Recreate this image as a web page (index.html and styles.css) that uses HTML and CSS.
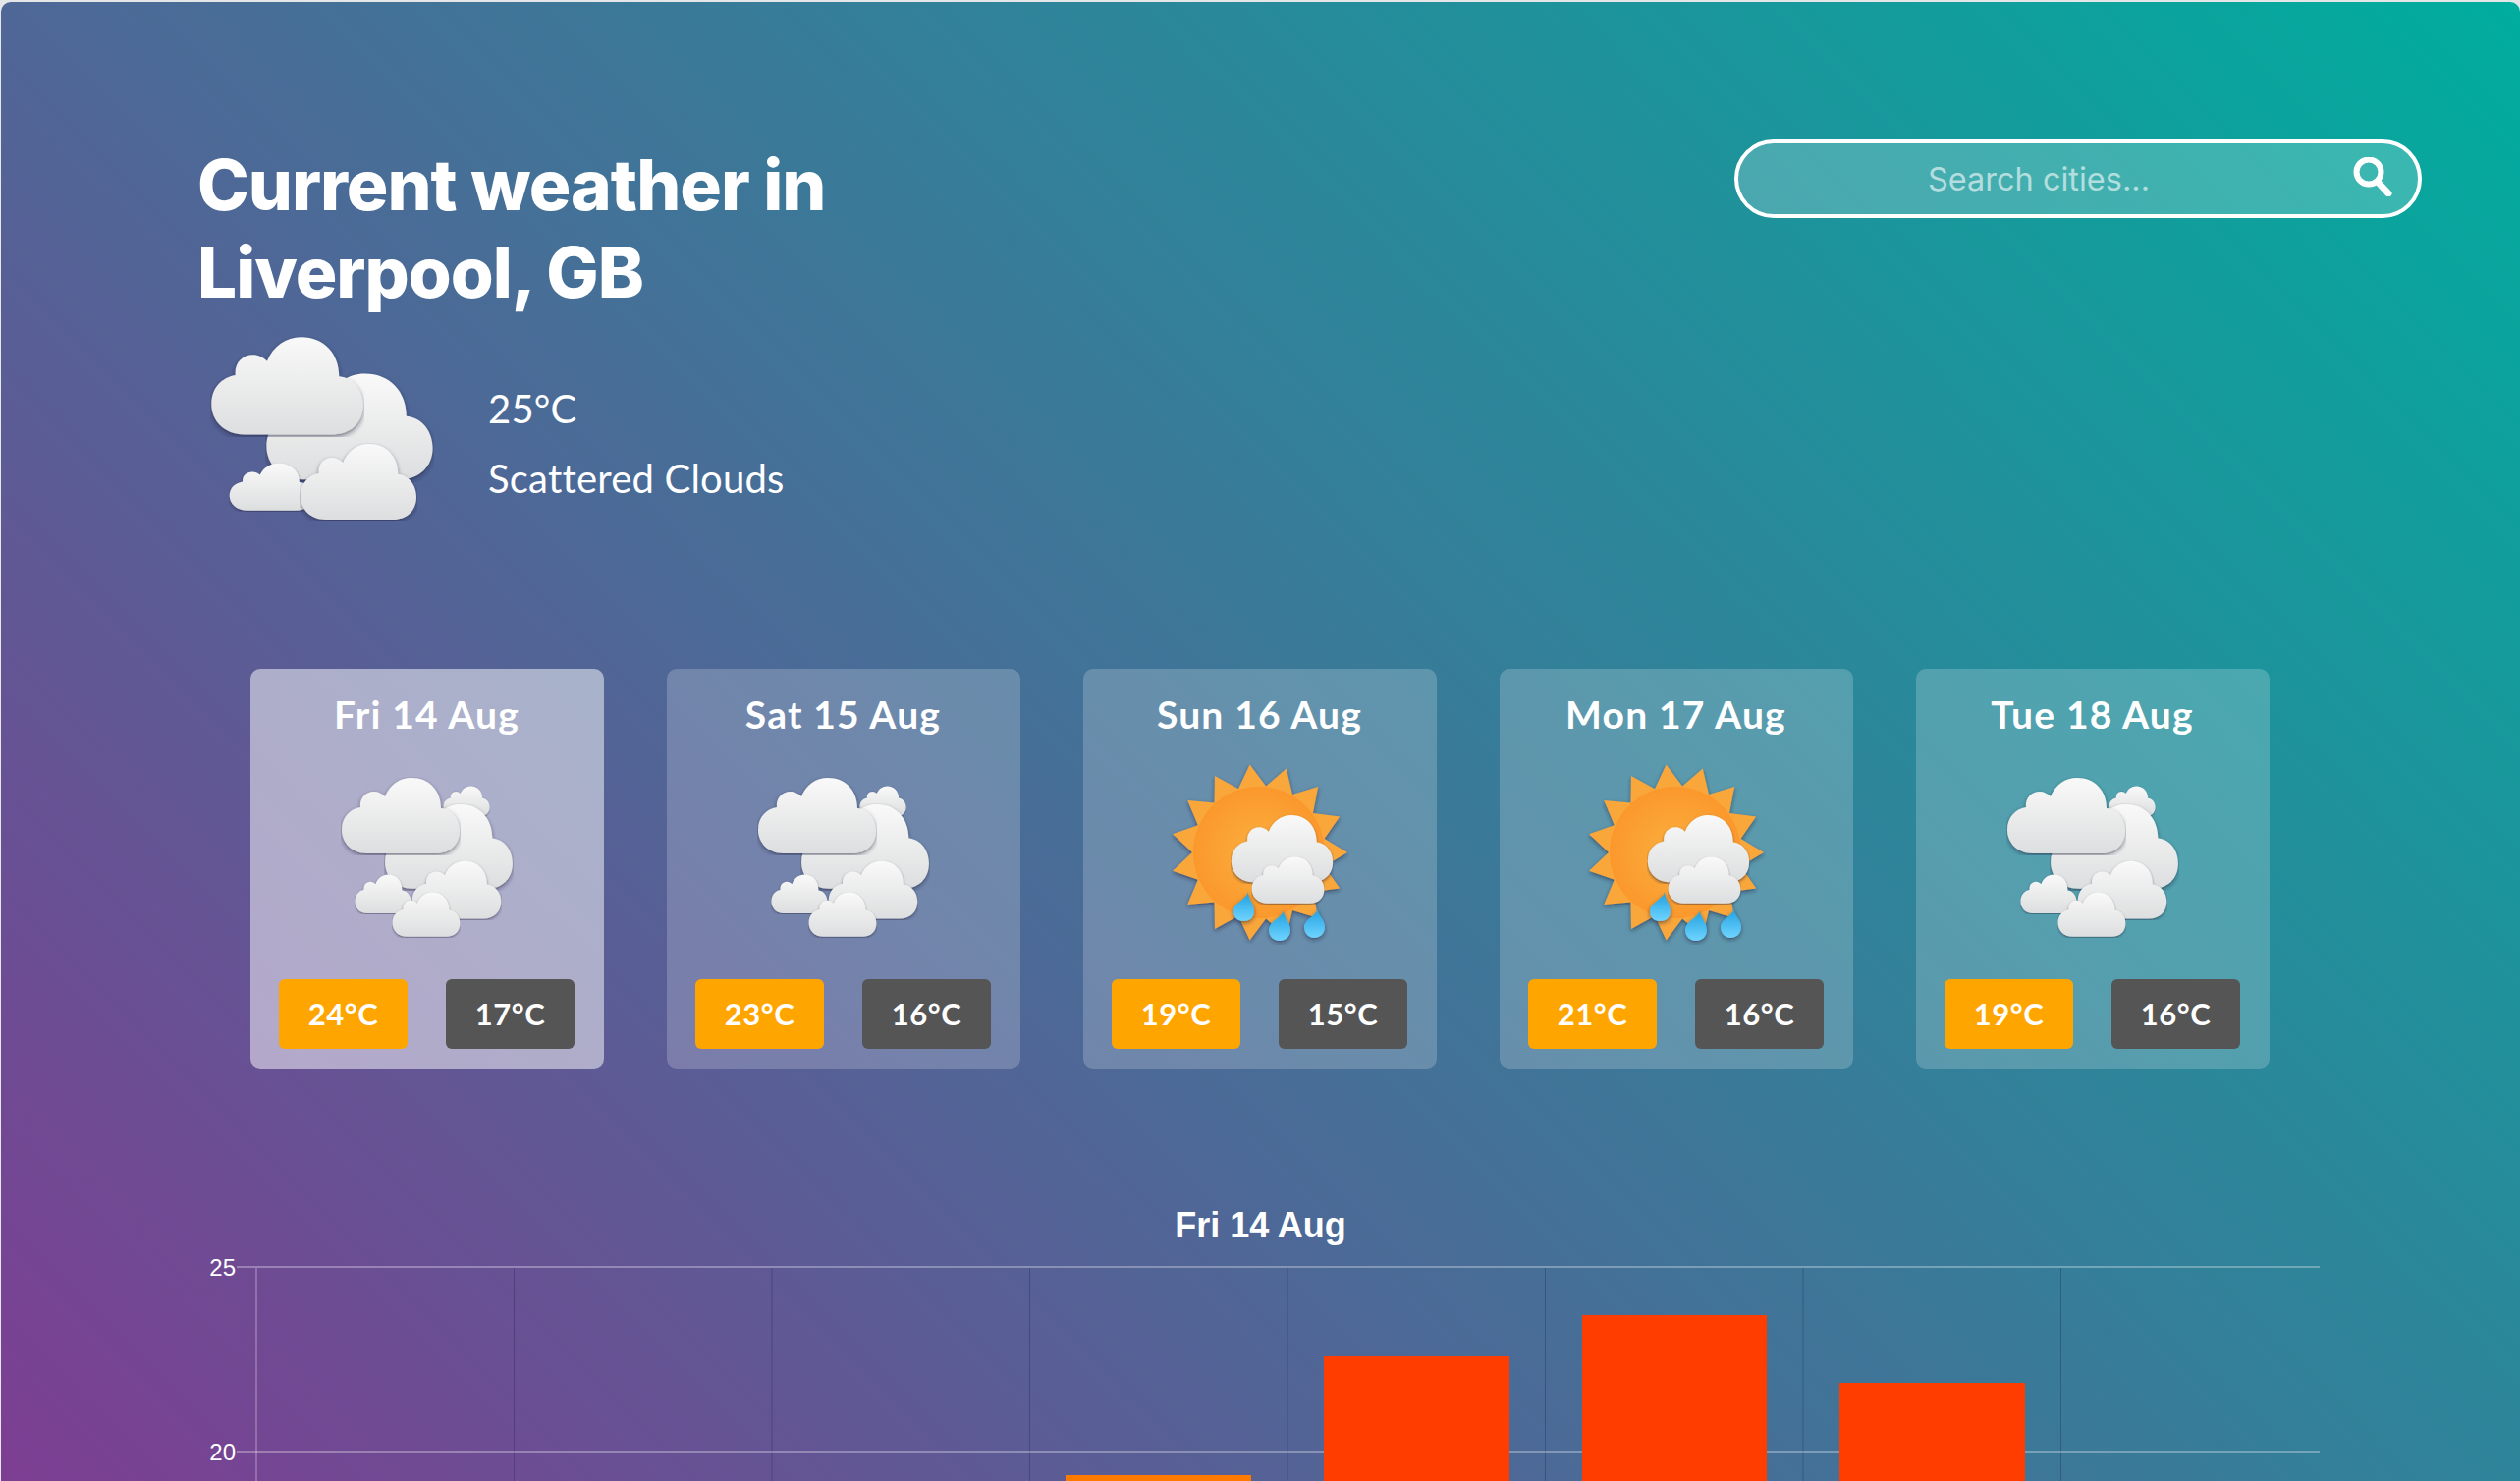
FILE: index.html
```html
<!DOCTYPE html>
<html lang="en">
<head>
    <meta charset="UTF-8">
    <meta name="viewport" content="width=device-width, initial-scale=1.0">
    <title>Current weather</title>
    <link rel="stylesheet" href="styles.css">
</head>
<body>
    <svg class="defs" width="0" height="0" aria-hidden="true">
        <defs>
            <linearGradient id="cloudFill" x1="0" y1="0" x2="0" y2="1">
                <stop offset="0" stop-color="#f9f9f9"/>
                <stop offset="1" stop-color="#dddedf"/>
            </linearGradient>
            <linearGradient id="dropFill" x1="0" y1="0" x2="0" y2="1">
                <stop offset="0" stop-color="#1f9fe0"/>
                <stop offset="1" stop-color="#6fd4ff"/>
            </linearGradient>
            <radialGradient id="sunFill" cx="0.5" cy="0.5" r="0.5">
                <stop offset="0" stop-color="#fbb040"/>
                <stop offset="1" stop-color="#fb982c"/>
            </radialGradient>
            <filter id="soft" x="-20%" y="-20%" width="140%" height="150%">
                <feDropShadow dx="0" dy="2" stdDeviation="2" flood-color="#1c1c3a" flood-opacity="0.55"/>
            </filter>
            <symbol id="cloud" viewBox="0 0 122 80" preserveAspectRatio="none">
                <path fill="url(#cloudFill)" filter="url(#soft)" d="M27 78C11 78 1 67 1 54C1 41 9 33 20 31C19 22 25 15 34 15C38 15 42 17 45 20C50 8 60 1 72 1C90 1 102 14 102 32C114 33 121 44 121 55C121 69 111 78 97 78Z"/>
            </symbol>
            <symbol id="clouds" viewBox="-7 -19 190 190">
                <use href="#cloud" x="104" y="9" width="48" height="32"/>
                <use href="#cloud" x="44" y="27" width="132" height="89"/>
                <use href="#cloud" x="14" y="99" width="58" height="41"/>
                <use href="#cloud" x="0" y="0" width="122" height="80"/>
                <use href="#cloud" x="72" y="85" width="92" height="61"/>
                <use href="#cloud" x="52" y="117" width="70" height="47"/>
            </symbol>
            <symbol id="sunRain" viewBox="-5 -6 190 190">
                <polygon fill="#f9a63a" filter="url(#soft)" points="79.6,0.5 96.1,22.4 116.8,4.4 123,31.1 149.2,23.1 144,50 171.2,53.4 155.5,75.9 179,90 155.5,104.1 171.2,126.6 144,130 149.2,156.9 123,148.9 116.8,175.6 96.1,157.6 79.6,179.5 68,154.7 44,167.9 43.5,140.5 16.2,142.9 26.8,117.7 1,108.7 21,90 1,71.3 26.8,62.3 16.2,37.1 43.5,39.5 44,12.1 68,25.3"/>
                <circle cx="89" cy="90" r="67" fill="url(#sunFill)"/>
                <use href="#cloud" x="60" y="51" width="105" height="71"/>
                <use href="#cloud" x="81" y="94" width="75" height="49"/>
                <path fill="url(#dropFill)" filter="url(#soft)" d="M78 130C77 137 63 141 63 150C63 157 68 160 73 160C79 160 84 157 84 150C84 141 78 138 78 130Z"/>
                <path fill="url(#dropFill)" filter="url(#soft)" d="M114 149C113 156 99 160 99 169C99 176 104 180 110 180C116 180 121 176 121 169C121 160 114 157 114 149Z"/>
                <path fill="url(#dropFill)" filter="url(#soft)" d="M149 147C148 154 135 158 135 166C135 173 140 177 145 177C151 177 156 173 156 166C156 158 149 155 149 147Z"/>
            </symbol>
        </defs>
    </svg>

    <div class="page">
        <header class="top">
            <div class="current">
                <h1>Current weather in<br>Liverpool, GB</h1>
                <div class="current-info">
                    <svg class="current-icon"><use href="#cloud" x="56" y="37" width="172" height="112"/><use href="#cloud" x="19" y="129" width="86" height="50"/><use href="#cloud" x="0" y="0" width="157" height="103"/><use href="#cloud" x="91" y="109" width="120" height="80"/></svg>
                    <div class="current-text">
                        <p>25°C</p>
                        <p>Scattered Clouds</p>
                    </div>
                </div>
            </div>
            <form class="search">
                <input type="text" placeholder="Search cities...">
                <svg class="search-icon" viewBox="0 0 41 40"><circle cx="16" cy="15" r="12.5" fill="none" stroke="#fff" stroke-width="6"/><path d="M25 25L36 37" stroke="#fff" stroke-width="7" stroke-linecap="round"/></svg>
            </form>
        </header>

        <section class="forecast">
            <article class="day active">
                <h2>Fri 14 Aug</h2>
                <svg class="day-icon"><use href="#clouds"/></svg>
                <div class="temps"><span class="high">24°C</span><span class="low">17°C</span></div>
            </article>
            <article class="day">
                <h2>Sat 15 Aug</h2>
                <svg class="day-icon"><use href="#clouds"/></svg>
                <div class="temps"><span class="high">23°C</span><span class="low">16°C</span></div>
            </article>
            <article class="day">
                <h2>Sun 16 Aug</h2>
                <svg class="day-icon"><use href="#sunRain"/></svg>
                <div class="temps"><span class="high">19°C</span><span class="low">15°C</span></div>
            </article>
            <article class="day">
                <h2>Mon 17 Aug</h2>
                <svg class="day-icon"><use href="#sunRain"/></svg>
                <div class="temps"><span class="high">21°C</span><span class="low">16°C</span></div>
            </article>
            <article class="day">
                <h2>Tue 18 Aug</h2>
                <svg class="day-icon"><use href="#clouds"/></svg>
                <div class="temps"><span class="high">19°C</span><span class="low">16°C</span></div>
            </article>
        </section>

        <section class="chart">
            <h3>Fri 14 Aug</h3>
            <svg class="chart-plot" viewBox="0 0 2400 260">
                <path class="grid-v" d="M522.5 27V260M785 27V260M1047.5 27V260M1310 27V260M1572.5 27V260M1835 27V260M2097.5 27V260"/>
                <path class="axis-v" d="M260 27V260"/>
                <path class="grid-h" d="M240 26H2361M240 214H2361"/>
                <text class="tick" x="239" y="34.5" text-anchor="end">25</text>
                <text class="tick" x="239" y="222.5" text-anchor="end">20</text>
                <rect class="bar-warm" x="1084" y="238" width="189" height="22"/>
                <rect class="bar-hot" x="1347" y="117" width="189" height="143"/>
                <rect class="bar-hot" x="1610" y="75" width="188" height="185"/>
                <rect class="bar-hot" x="1872" y="144" width="189" height="116"/>
            </svg>
        </section>
    </div>
</body>
</html>
```

FILE: styles.css
```css
* {
    box-sizing: border-box;
}
html, body {
    height: 100%;
}
body {
    margin: 0;
    background: #e4e6e8;
    overflow: hidden;
    font-family: 'Lato', 'Liberation Sans', sans-serif;
    color: #fff;
}
.defs {
    display: block;
    height: 0;
}
.page {
    height: 1506px;
    margin: 2px 0 0 1px;
    padding: 0 100px 0 200px;
    border-radius: 10px 10px 0 0;
    background: linear-gradient(45deg, #7d3e92, #00ad9e);
    overflow: hidden;
}
.top {
    display: flex;
    justify-content: space-between;
    align-items: flex-start;
    height: 679px;
}
h1 {
    margin: 142px 0 0;
    font-family: 'Inter', sans-serif;
    font-size: 71px;
    font-weight: 800;
    letter-spacing: -1px;
    line-height: 89px;
}
.current-info {
    display: flex;
    align-items: center;
    gap: 54px;
    margin-top: 20px;
    margin-left: 13px;
}
.current-icon {
    width: 229px;
    height: 190px;
    overflow: visible;
}
.current-text {
    padding-top: 30px;
}
.current-text p {
    margin: 0;
    font-size: 40px;
    font-weight: 400;
    letter-spacing: 0.2px;
    line-height: 71px;
}
.search {
    position: relative;
    width: 700px;
    height: 80px;
    margin-top: 140px;
}
.search input {
    width: 100%;
    height: 100%;
    padding: 0 80px 0 0;
    border: 4px solid #fff;
    border-radius: 40px;
    outline: none;
    background: rgba(255,255,255,0.2);
    color: #fff;
    font-family: 'Inter', sans-serif;
    font-size: 32.5px;
    text-align: center;
}
.search input::placeholder {
    color: rgba(255,255,255,0.6);
}
.search-icon {
    position: absolute;
    top: 18px;
    right: 29px;
    width: 41px;
    height: 40px;
}
.forecast {
    display: flex;
    gap: 64px;
    margin-left: 54px;
}
.day {
    flex: none;
    width: 360px;
    height: 407px;
    padding: 0 30px 0 29px;
    border-radius: 10px;
    background: rgba(255,255,255,0.2);
    text-align: center;
}
.day.active {
    background: rgba(255,255,255,0.5);
}
.day h2 {
    margin: 0;
    padding-top: 23px;
    font-size: 39px;
    font-weight: 700;
    letter-spacing: 1.2px;
    line-height: 47px;
}
.day-icon {
    display: block;
    width: 190px;
    height: 190px;
    margin: 21px auto 0;
    overflow: visible;
}
.temps {
    display: flex;
    justify-content: space-between;
    margin-top: 35px;
}
.temps span {
    width: 131px;
    height: 71px;
    border-radius: 6px;
    font-size: 31px;
    font-weight: 700;
    letter-spacing: 0.5px;
    line-height: 71px;
}
.high {
    background: #ffa500;
}
.low {
    background: #555;
}
.chart {
    margin-left: -200px;
    margin-top: 144px;
}
.chart h3 {
    margin: 0;
    width: 2565px;
    font-family: 'Liberation Sans', sans-serif;
    font-size: 36px;
    font-weight: 700;
    line-height: 32px;
    text-align: center;
}
.chart-plot {
    display: block;
    width: 2400px;
    height: 260px;
}
.grid-v {
    stroke: rgba(30,40,80,0.35);
    stroke-width: 1;
    fill: none;
}
.axis-v {
    stroke: rgba(255,255,255,0.3);
    stroke-width: 1.5;
    fill: none;
}
.grid-h {
    stroke: rgba(255,255,255,0.3);
    stroke-width: 2;
    fill: none;
}
.tick {
    fill: #fff;
    font-family: 'Liberation Sans', sans-serif;
    font-size: 24px;
}
.bar-hot {
    fill: #ff3d00;
}
.bar-warm {
    fill: #ff7a00;
}
```
